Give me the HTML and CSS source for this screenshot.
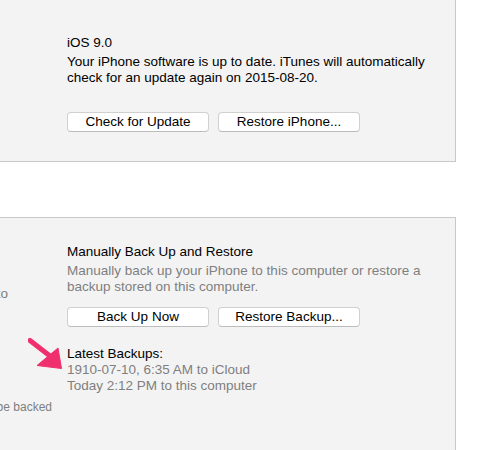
FILE: index.html
```html
<!DOCTYPE html>
<html lang="en">
<head>
  <meta charset="UTF-8" />
  <title>iPhone Summary</title>
  <link rel="stylesheet" href="styles.css">
</head>
<body>
  <div class="pane pane-update">
    <div class="section">
      <div class="title">iOS 9.0</div>
      <p class="text">Your iPhone software is up to date. iTunes will automatically check for an update again on 2015-08-20.</p>
      <div class="buttons">
        <button>Check for Update</button>
        <button>Restore iPhone...</button>
      </div>
    </div>
  </div>

  <div class="pane pane-backup">
    <div class="side">
      <div class="side-line side-first">Back up the most important data on your iPhone to</div>
      <div class="side-line side-small">A full backup of your iPhone will be stored on this computer. Health data will not be backed</div>
    </div>
    <div class="section">
      <div class="title">Manually Back Up and Restore</div>
      <p class="text muted">Manually back up your iPhone to this computer or restore a backup stored on this computer.</p>
      <div class="buttons">
        <button>Back Up Now</button>
        <button>Restore Backup...</button>
      </div>
      <div class="latest">
        <div class="title">Latest Backups:</div>
        <div class="muted">1910-07-10, 6:35 AM to iCloud</div>
        <div class="muted">Today 2:12 PM to this computer</div>
      </div>
    </div>

    <!-- callout arrow pointing at the backup list -->
    <svg class="arrow" width="40" height="34" viewBox="0 0 40 34">
      <path d="M2 2.5 L22 18" stroke="#f0306e" stroke-width="5" stroke-linecap="round" fill="none" />
      <path d="M33.5 30.5 L9 27.5 L30 10 Z" fill="#f0306e" stroke="#f0306e" stroke-width="1" stroke-linejoin="round" />
    </svg>
  </div>
</body>
</html>
```

FILE: styles.css
```css
body {
  margin: 0;
  background-color: #fff;
  font-family: "Liberation Sans", Arial, sans-serif;
  font-size: 13px;
  color: #000;
}
.pane {
  background-color: #f3f3f3;
  border: 1px solid #c8c8c8;
  width: 457px;
  box-sizing: border-box;
  margin-left: -1px;
}
.pane-update {
  margin-top: -1px;
  height: 163px;
  padding: 35px 0 0 67px;
}
.pane-backup {
  position: relative;
  margin-top: 55px;
  height: 234px;
  display: flex;
  padding-top: 26px;
}
.section {
  width: 370px;
}
.title {
  line-height: 16px;
  font-size: 13.5px;
}
.text {
  margin: 3px 0 0;
  line-height: 16px;
  font-size: 13.5px;
}
.muted {
  color: #7f7f7f;
  line-height: 16px;
  font-size: 13.5px;
}
.buttons {
  display: flex;
  gap: 9px;
  margin-top: 26px;
}
.pane-backup .buttons {
  margin-top: 12px;
}
button {
  width: 142px;
  height: 20px;
  padding: 0;
  background-color: #fff;
  border: 1px solid #d0d0d0;
  border-bottom-color: #bcbcbc;
  border-radius: 4px;
  font-family: inherit;
  font-size: 13.5px;
  color: #000;
  line-height: 18px;
}
.latest {
  margin-top: 19px;
}
.side {
  width: 67px;
  flex-shrink: 0;
  overflow: hidden;
}
.side-line {
  display: flex;
  justify-content: flex-end;
  white-space: nowrap;
  color: #7f7f7f;
}
.side-first {
  margin-top: 42px;
  margin-right: 59px;
  font-size: 13.5px;
}
.side-small {
  margin-top: 99px;
  margin-right: 15px;
  font-size: 12px;
}
.arrow {
  position: absolute;
  left: 28px;
  top: 120px;
}
```
